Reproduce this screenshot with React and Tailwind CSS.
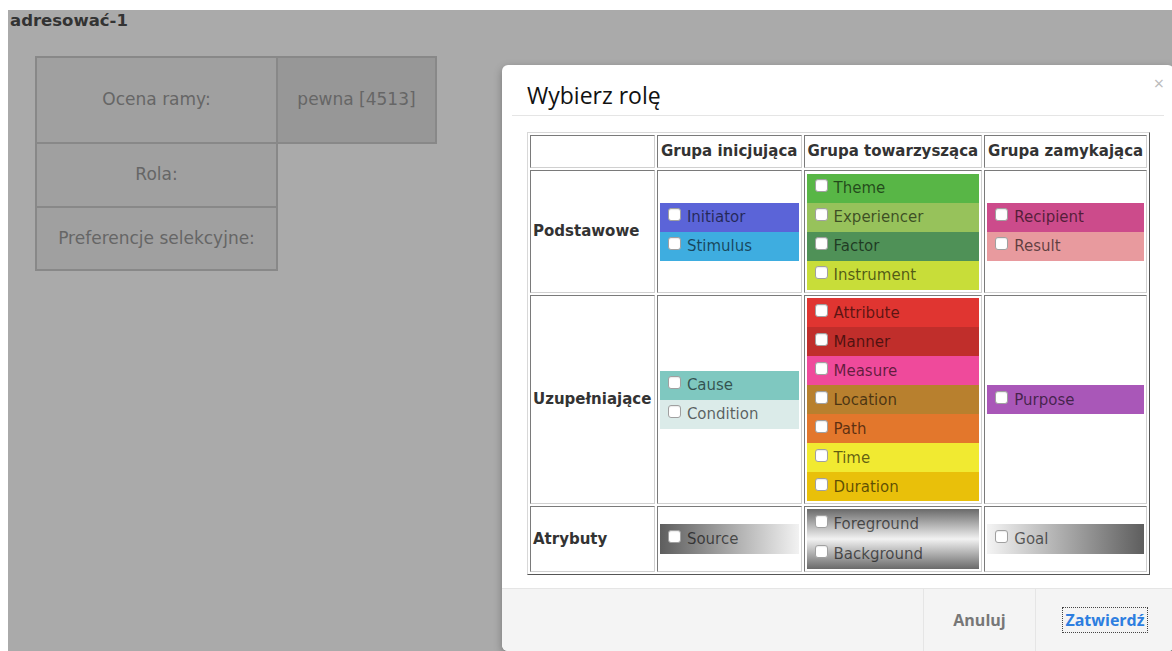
import React from "react";

const cellBorder =
    "border border-t-[#7a7a7a] border-l-[#7a7a7a] border-r-[#d0d0d0] border-b-[#d0d0d0] p-[2px]";

function Check() {
    return (
        <span className="w-[13px] h-[13px] shrink-0 mb-[5px] bg-white border border-[#a0a0a0] rounded-[3px] shadow-[inset_0_1px_1px_rgba(0,0,0,0.08)]" />
    );
}

function Role({ label, className = "", tall = false }) {
    return (
        <div className={`flex items-center pl-2 ${tall ? "h-[30px]" : "h-[29px]"} ${className}`}>
            <Check />
            <span className="ml-1.5 mt-[1px] text-black/60">{label}</span>
        </div>
    );
}

function RowLabel({ children, h = "" }) {
    return <td className={`${cellBorder} ${h} w-[124px] font-bold text-[#333] text-left`}>{children}</td>;
}

function HeadCell({ children, w }) {
    return <th className={`${cellBorder} ${w} h-[33px] font-bold text-[#333] whitespace-nowrap`}>{children}</th>;
}

export default function App() {
    return (
        <div className="w-[1172px] h-[651px] overflow-hidden bg-white pt-[10px] pl-[8px] font-['DejaVu_Sans',sans-serif] text-[15px]">
            <div className="relative h-full bg-[#aaaaaa]">
                <h1 className="pl-[2px] pt-[1px] font-bold text-[16.5px] text-[#333] leading-5">adresować-1</h1>

                {/* frame summary behind the dialog */}
                <table className="mt-[25px] ml-[27px] border-collapse text-[#666] text-[17px]">
                    <tbody>
                        <tr>
                            <td className="w-[241px] h-[86px] border-2 border-[#888] bg-[#a0a0a0] text-center">Ocena ramy:</td>
                            <td className="w-[159px] border-2 border-[#888] bg-[#979797] text-center">pewna [4513]</td>
                        </tr>
                        <tr>
                            <td className="h-[64px] border-2 border-[#888] bg-[#a0a0a0] text-center">Rola:</td>
                            <td />
                        </tr>
                        <tr>
                            <td className="h-[63px] border-2 border-[#888] bg-[#a0a0a0] text-center">Preferencje selekcyjne:</td>
                            <td />
                        </tr>
                    </tbody>
                </table>

                {/* role picker dialog */}
                <div className="absolute left-[494px] top-[55px] w-[672px] h-[586px] bg-white rounded-[6px] shadow-[0_3px_9px_rgba(0,0,0,0.3)] flex flex-col">
                    <div className="relative mx-[10px] h-[51px] border-b border-[#e5e5e5] pl-[15px] flex items-end pb-[6px]">
                        <h2 className="font-['Open_Sans',sans-serif] text-[23px] text-[#111] leading-7">Wybierz rolę</h2>
                        <span className="absolute right-[0px] top-[5px] text-[#bbb] text-[18px] font-['Open_Sans',sans-serif]">×</span>
                    </div>

                    <div className="flex-1 pl-[25px] pt-[16px]">
                        <table className="border-separate border-spacing-[2px] border border-t-[#d8d8d8] border-l-[#d8d8d8] border-r-[#555] border-b-[#555] w-[623px]">
                            <thead>
                                <tr>
                                    <HeadCell w="w-[124px]" />
                                    <HeadCell w="w-[144px]">Grupa inicjująca</HeadCell>
                                    <HeadCell w="w-[178px]">Grupa towarzysząca</HeadCell>
                                    <HeadCell w="w-[162px]">Grupa zamykająca</HeadCell>
                                </tr>
                            </thead>
                            <tbody>
                                <tr>
                                    <RowLabel h="h-[123px]">Podstawowe</RowLabel>
                                    <td className={cellBorder}>
                                        <Role label="Initiator" className="bg-[#5b64d8]" />
                                        <Role label="Stimulus" className="bg-[#3eade0]" />
                                    </td>
                                    <td className={cellBorder}>
                                        <Role label="Theme" className="bg-[#58b646]" />
                                        <Role label="Experiencer" className="bg-[#97c25b]" />
                                        <Role label="Factor" className="bg-[#4f9157]" />
                                        <Role label="Instrument" className="bg-[#c8dd39]" />
                                    </td>
                                    <td className={cellBorder}>
                                        <Role label="Recipient" className="bg-[#cc4b8b]" />
                                        <Role label="Result" className="bg-[#e89a9e]" />
                                    </td>
                                </tr>
                                <tr>
                                    <RowLabel>Uzupełniające</RowLabel>
                                    <td className={cellBorder}>
                                        <Role label="Cause" className="bg-[#7fc8c0]" />
                                        <Role label="Condition" className="bg-[#dbebe9]" />
                                    </td>
                                    <td className={cellBorder}>
                                        <Role label="Attribute" className="bg-[#e03531]" />
                                        <Role label="Manner" className="bg-[#c02e2b]" />
                                        <Role label="Measure" className="bg-[#ef4a9b]" />
                                        <Role label="Location" className="bg-[#b8802e]" />
                                        <Role label="Path" className="bg-[#e3772c]" />
                                        <Role label="Time" className="bg-[#f1ea31]" />
                                        <Role label="Duration" className="bg-[#e9c00a]" />
                                    </td>
                                    <td className={cellBorder}>
                                        <Role label="Purpose" className="bg-[#a957b8]" />
                                    </td>
                                </tr>
                                <tr>
                                    <RowLabel>Atrybuty</RowLabel>
                                    <td className={cellBorder}>
                                        <Role tall label="Source" className="bg-[linear-gradient(to_right,#5e5e5e,#f2f2f2)]" />
                                    </td>
                                    <td className={cellBorder}>
                                        <div className="bg-[linear-gradient(to_bottom,#6a6a6a,#f2f2f2_50%,#6a6a6a)]">
                                            <Role tall label="Foreground" />
                                            <Role tall label="Background" />
                                        </div>
                                    </td>
                                    <td className={cellBorder}>
                                        <Role tall label="Goal" className="bg-[linear-gradient(to_right,#f4f4f4,#5e5e5e)]" />
                                    </td>
                                </tr>
                            </tbody>
                        </table>
                    </div>

                    <div className="h-[63px] bg-[#f4f4f4] border-t border-[#e5e5e5] rounded-b-[6px] flex justify-end font-['Open_Sans',sans-serif] font-bold text-[16px]">
                        <button className="w-[112px] border-l border-[#e5e5e5] text-[#777]">Anuluj</button>
                        <button className="w-[139px] border-l border-[#e5e5e5] text-[#2d7ee0]">
                            <span className="px-[2px] py-[1px] outline outline-1 outline-dotted outline-[#444]">Zatwierdź</span>
                        </button>
                    </div>
                </div>
            </div>
        </div>
    );
}
